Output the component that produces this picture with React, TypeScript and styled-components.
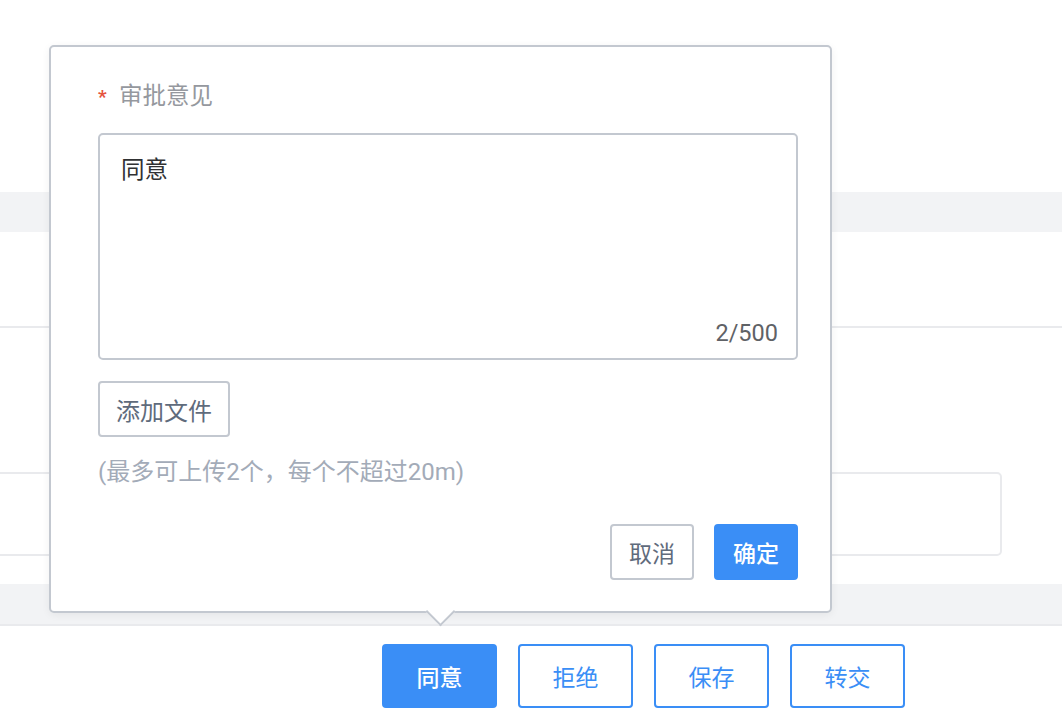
import React from 'react'
import styled, { createGlobalStyle } from 'styled-components'

const colors = {
  blue: '#3a8ef6',
  border: '#c3c8d0',
  band: '#f2f3f5',
  line: '#e9eaed',
  label: '#95989e',
  text: '#303133',
  slate: '#5f6b7c',
  hint: '#a3abb8',
  red: '#e5533d',
}

const GlobalStyle = createGlobalStyle`
  html, body {
    margin: 0;
    padding: 0;
    background: #ffffff;
    font-family: Roboto, "Noto Sans CJK SC", "Noto Sans", sans-serif;
  }
  * { box-sizing: border-box; }
`

const Page = styled.div`
  position: relative;
  width: 1062px;
  height: 722px;
  overflow: hidden;
  background: #ffffff;
`

const Blank = styled.div<{ h: number }>`
  height: ${p => p.h}px;
`

const Band = styled.div<{ h: number; bottomLine?: boolean }>`
  height: ${p => p.h}px;
  background: ${colors.band};
  border-bottom: ${p => (p.bottomLine ? `2px solid ${colors.line}` : 'none')};
`

const Row = styled.div<{ h: number }>`
  height: ${p => p.h}px;
  border-bottom: 2px solid ${colors.line};
`

const FieldRow = styled.div`
  display: flex;
  padding-top: 144px;
  height: 256px;
`

const FieldBox = styled.div`
  margin-left: -20px;
  width: 1022px;
  height: 84px;
  border: 2px solid ${colors.line};
  border-radius: 5px;
`

const Footer = styled.div`
  display: flex;
  justify-content: flex-end;
  gap: 21px;
  padding: 18px 157px 0 0;
`

const Button = styled.button<{ primary?: boolean; tone?: 'blue' | 'gray' }>`
  display: flex;
  align-items: center;
  justify-content: center;
  padding: 0;
  font-family: inherit;
  font-size: 23px;
  font-weight: ${p => (p.primary ? 500 : 400)};
  border-radius: 4px;
  cursor: pointer;
  ${p =>
    p.primary
      ? `background: ${colors.blue}; color: #fff; border: 2px solid ${colors.blue};`
      : p.tone === 'gray'
      ? `background: #fff; color: ${colors.slate}; border: 2px solid ${colors.border};`
      : `background: #fff; color: ${colors.blue}; border: 2px solid ${colors.blue};`}
`

const ActionButton = styled(Button)`
  width: 115px;
  height: 64px;
`

const SmallButton = styled(Button)`
  width: 84px;
  height: 56px;
`

const Popover = styled.div`
  position: absolute;
  left: 49px;
  top: 45px;
  width: 783px;
  height: 568px;
  background: #fff;
  border: 2px solid ${colors.border};
  border-radius: 5px;
  box-shadow: 0 2px 8px rgba(0, 0, 0, 0.06);
  padding: 30px 32px 0 47px;
  display: flex;
  flex-direction: column;
`

const Arrow = styled.div`
  position: absolute;
  left: 379px;
  top: 554px;
  width: 21px;
  height: 21px;
  background: #fff;
  border-right: 2px solid ${colors.border};
  border-bottom: 2px solid ${colors.border};
  transform: rotate(45deg);
`

const Label = styled.div`
  display: flex;
  align-items: center;
  gap: 6px;
  height: 34px;
  font-size: 23.5px;
  color: ${colors.label};
`

const Star = styled.span`
  color: ${colors.red};
  font-size: 19px;
  font-weight: 700;
  margin-top: 5px;
  width: 15px;
`

const TextBox = styled.div`
  margin-top: 22px;
  width: 700px;
  height: 227px;
  border: 2px solid ${colors.border};
  border-radius: 5px;
  display: flex;
  flex-direction: column;
  padding: 18px 18px 8px 21px;
`

const TextArea = styled.textarea`
  flex: 1;
  border: none;
  outline: none;
  resize: none;
  padding: 0;
  font-family: inherit;
  font-size: 23.5px;
  line-height: 34px;
  color: ${colors.text};
  background: transparent;
`

const Counter = styled.div`
  text-align: right;
  font-size: 23.5px;
  line-height: 34px;
  color: #5f6266;
`

const AddFile = styled(Button)`
  margin-top: 21px;
  width: 132px;
  height: 56px;
  font-size: 24px;
`

const Hint = styled.div`
  margin-top: 18px;
  font-size: 24px;
  line-height: 34px;
  color: ${colors.hint};
`

const PopFooter = styled.div`
  display: flex;
  justify-content: flex-end;
  gap: 20px;
  margin-top: 35px;
  width: 700px;
`

export default function App() {
  return (
    <Page>
      <GlobalStyle />
      <Blank h={192} />
      <Band h={40} />
      <Row h={96} />
      <FieldRow>
        <FieldBox />
      </FieldRow>
      <Band h={42} bottomLine />
      <Footer>
        <ActionButton primary>同意</ActionButton>
        <ActionButton>拒绝</ActionButton>
        <ActionButton>保存</ActionButton>
        <ActionButton>转交</ActionButton>
      </Footer>

      <Popover>
        <Label>
          <Star>*</Star>
          审批意见
        </Label>
        <TextBox>
          <TextArea defaultValue="同意" />
          <Counter>2/500</Counter>
        </TextBox>
        <div>
          <AddFile tone="gray">添加文件</AddFile>
        </div>
        <Hint>(最多可上传2个，每个不超过20m)</Hint>
        <PopFooter>
          <SmallButton tone="gray">取消</SmallButton>
          <SmallButton primary>确定</SmallButton>
        </PopFooter>
        <Arrow />
      </Popover>
    </Page>
  )
}
